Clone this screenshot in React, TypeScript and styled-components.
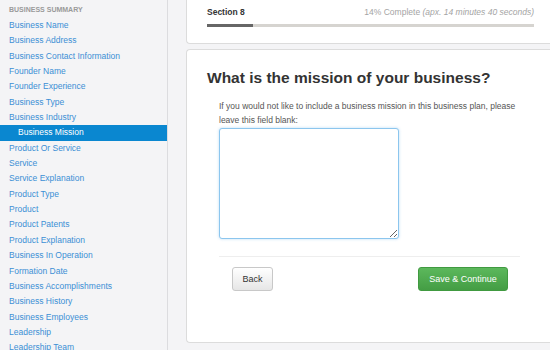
import styled, { createGlobalStyle } from "styled-components";

const GlobalStyle = createGlobalStyle`
  html, body {
    margin: 0;
    padding: 0;
    background: #f4f4f6;
    font-family: "Liberation Sans", Arial, sans-serif;
    overflow: hidden;
  }
`;

const sections = [
  "Business Name",
  "Business Address",
  "Business Contact Information",
  "Founder Name",
  "Founder Experience",
  "Business Type",
  "Business Industry",
  "Business Mission",
  "Product Or Service",
  "Service",
  "Service Explanation",
  "Product Type",
  "Product",
  "Product Patents",
  "Product Explanation",
  "Business In Operation",
  "Formation Date",
  "Business Accomplishments",
  "Business History",
  "Business Employees",
  "Leadership",
  "Leadership Team",
];

const active = "Business Mission";
const percent = 14;

function App() {
  return (
    <>
      <GlobalStyle />
      <Page>
        <Sidebar>
          <SideHeading>Business Summary</SideHeading>
          {sections.map((s) => (
            <SideItem key={s} $active={s === active}>
              {s}
            </SideItem>
          ))}
        </Sidebar>
        <Main>
          <ProgressCard>
            <ProgressRow>
              <SectionTitle>Section 8</SectionTitle>
              <Complete>
                {percent}% Complete <em>(apx. 14 minutes 40 seconds)</em>
              </Complete>
            </ProgressRow>
            <Track>
              <Fill style={{ width: `${percent}%` }} />
            </Track>
          </ProgressCard>
          <QuestionCard>
            <Question>What is the mission of your business?</Question>
            <Body>
              <Help>
                If you would not like to include a business mission in this
                business plan, please leave this field blank:
              </Help>
              <Answer />
              <Divider />
              <Actions>
                <BackButton>Back</BackButton>
                <SaveButton>Save &amp; Continue</SaveButton>
              </Actions>
            </Body>
          </QuestionCard>
        </Main>
      </Page>
    </>
  );
}
export default App;

const Page = styled.div`
  display: grid;
  grid-template-columns: 168px 1fr;
  height: 350px;
  width: 550px;
`;

const Sidebar = styled.nav`
  display: flex;
  flex-direction: column;
  background: #f4f4f6;
  border-right: 1px solid #dcdcdf;
  padding-top: 5px;
  overflow: hidden;
`;

const SideHeading = styled.div`
  font-size: 7px;
  font-weight: bold;
  color: #9a9a9a;
  text-transform: uppercase;
  padding-left: 9px;
  height: 10px;
  line-height: 10px;
  margin-bottom: 3px;
`;

const SideItem = styled.a<{ $active?: boolean }>`
  display: block;
  flex: none;
  height: 15.35px;
  line-height: 15.35px;
  font-size: 8.5px;
  white-space: nowrap;
  padding-left: ${(p) => (p.$active ? "18px" : "9px")};
  color: ${(p) => (p.$active ? "#fff" : "#3b8fd5")};
  background: ${(p) => (p.$active ? "#0a87d0" : "transparent")};
`;

const Main = styled.main`
  display: flex;
  flex-direction: column;
  gap: 5px;
  padding-left: 18px;
`;

const Card = styled.section`
  background: #fff;
  border: 1px solid #dcdcdc;
  border-right: none;
  border-radius: 4px 0 0 4px;
`;

const ProgressCard = styled(Card)`
  height: 44px;
  box-sizing: border-box;
  border-top: none;
  border-radius: 0 0 0 4px;
  padding: 6px 16px 0 20px;
`;

const ProgressRow = styled.div`
  display: flex;
  justify-content: space-between;
  align-items: baseline;
  font-size: 8.5px;
  height: 12px;
  line-height: 12px;
`;

const SectionTitle = styled.span`
  font-weight: bold;
  color: #333;
`;

const Complete = styled.span`
  color: #a4a4a4;
  em {
    font-style: italic;
  }
`;

const Track = styled.div`
  margin-top: 6px;
  height: 3px;
  background: #d6d4d0;
`;

const Fill = styled.div`
  height: 100%;
  background: #666;
`;

const QuestionCard = styled(Card)`
  height: 294px;
  box-sizing: border-box;
  padding: 17px 0 0 20px;
`;

const Question = styled.h1`
  margin: 0;
  font-size: 15.5px;
  line-height: 22px;
  font-weight: bold;
  color: #333;
`;

const Body = styled.div`
  display: flex;
  flex-direction: column;
  padding-left: 12px;
  width: 301px;
  margin-top: 10px;
`;

const Help = styled.p`
  margin: 0;
  font-size: 8.5px;
  line-height: 14px;
  color: #555;
  width: 310px;
`;

const Answer = styled.textarea`
  margin-top: 1px;
  width: 180px;
  height: 111px;
  box-sizing: border-box;
  border: 1px solid #8cc6ee;
  border-radius: 3px;
  box-shadow: 0 0 3px rgba(102, 175, 233, 0.45);
  background: #fff;
  outline: none;
  resize: both;
`;

const Divider = styled.hr`
  margin: 17px 0 0;
  border: none;
  border-top: 1px solid #eeeeee;
`;

const Actions = styled.div`
  display: flex;
  justify-content: space-between;
  padding: 10px 12px 0 13px;
`;

const Button = styled.button`
  height: 24px;
  box-sizing: border-box;
  font-family: "Liberation Sans", Arial, sans-serif;
  font-size: 9px;
  border-radius: 3px;
  cursor: pointer;
`;

const BackButton = styled(Button)`
  width: 41px;
  color: #333;
  background: linear-gradient(#ffffff, #e6e6e6);
  border: 1px solid #c8c8c8;
`;

const SaveButton = styled(Button)`
  width: 90px;
  color: #fff;
  background: linear-gradient(#5cb85c, #449d44);
  border: 1px solid #409a40;
`;
